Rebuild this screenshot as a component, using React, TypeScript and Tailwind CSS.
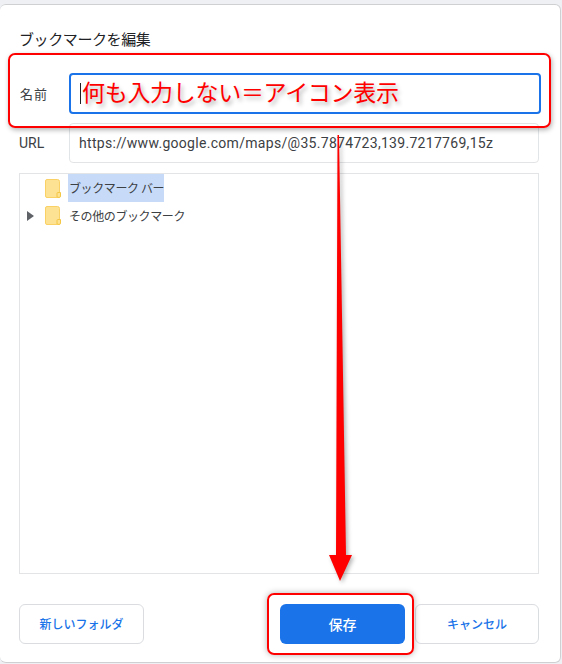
import React from "react";

const font = { jp: "font-['Noto_Sans_CJK_JP','Liberation_Sans',sans-serif]" };

function Folder() {
    return (
        <svg width="17" height="19" viewBox="0 0 17 19" className="shrink-0">
            <path d="M2 .5h10.5a2 2 0 0 1 2 2v14a2 2 0 0 1-2 2H2a1.500 1.500 0 0 1-1.500-1.500V2A1.500 1.500 0 0 1 2 .5z" fill="#fde293" stroke="#fad165" />
            <path d="M12 18v-3.500a1 1 0 0 1 1-1h2.500V17a1.500 1.500 0 0 1-1.500 1.500z" fill="#fde293" stroke="#f3c644" />
        </svg>
    );
}

export default function App() {
    return (
        <div className={`relative w-[562px] h-[664px] overflow-hidden bg-[#eef0f3] pt-[4px] text-[#3c4043] ${font.jp}`}>
            {/* Dialog */}
            <div className="w-[561px] h-[659px] bg-white border border-[#cfd0d2] border-l-0 rounded-[6px] pl-[19px] pr-[21px] pt-[23px] flex flex-col">
                <h1 className="text-[15px] leading-[22px] tracking-[-0.4px] text-[#202124] mb-[23px]">ブックマークを編集</h1>

                <div className="flex items-center h-[41px] mb-[9px] w-[522px]">
                    <span className="w-[50px] shrink-0 pl-px text-[13px] tracking-[1px] text-[#3c4043]">名前</span>
                    <div className="flex-1 h-[41px] border-2 border-[#1a73e8] rounded-[4px] flex items-center pl-[9px]">
                        <span className="w-px h-[21px] bg-[#202124] mr-[1px]"></span>
                        <span className="pb-[6px] text-[23px] leading-[30px] tracking-[-0.3px] text-[#ff0000] [text-shadow:2px_3px_4px_rgba(0,0,0,0.3)] whitespace-nowrap">何も入力しない＝アイコン表示</span>
                    </div>
                </div>

                <div className="flex items-center h-[40px] mb-[10px]">
                    <span className="w-[50px] shrink-0 text-[14px] font-['Roboto','Liberation_Sans',sans-serif] text-[#3c4043]">URL</span>
                    <div className="flex-1 h-[40px] border border-[#e3e4e6] rounded-[4px] flex items-center pl-[9px] text-[14px] tracking-[0.3px] font-['Roboto','Liberation_Sans',sans-serif] text-[#3c4043] whitespace-nowrap">
                        https://www.google.com/maps/@35.7874723,139.7217769,15z
                    </div>
                </div>

                {/* Folder tree */}
                <div className="h-[401px] border border-[#e3e4e6] text-[12px] tracking-[-0.4px] text-[#3c4043]">
                    <div className="flex items-center h-[28px] pl-[25px]">
                        <Folder />
                        <span className="ml-[6px] h-[28px] w-[96px] bg-[#c7dbf9] flex items-center pl-[1px] whitespace-nowrap">ブックマーク バー</span>
                    </div>
                    <div className="flex items-center h-[27px] pl-[7px]">
                        <span className="w-0 h-0 border-y-[5px] border-y-transparent border-l-[7px] border-l-[#5f6368] mr-[11px]"></span>
                        <Folder />
                        <span className="ml-[7px] whitespace-nowrap">その他のブックマーク</span>
                    </div>
                </div>

                {/* Buttons */}
                <div className="flex items-center mt-[30px] text-[12px] font-medium">
                    <button className="w-[125px] h-[40px] border border-[#dadce0] rounded-[6px] text-[#1a73e8]">新しいフォルダ</button>
                    <button className="ml-auto w-[125px] h-[40px] rounded-[6px] bg-[#1a73e8] text-white text-[14px]">保存</button>
                    <button className="ml-[10px] w-[124px] h-[40px] border border-[#dadce0] rounded-[6px] text-[#1a73e8]">キャンセル</button>
                </div>
            </div>

            {/* Annotations */}
            <div className="absolute left-[8px] top-[53px] w-[543px] h-[75px] border-2 border-[#ff0000] rounded-[7px] shadow-[1px_2px_5px_rgba(0,0,0,0.3)]"></div>
            <div className="absolute left-[267px] top-[593px] w-[147px] h-[62px] border-2 border-[#ff0000] rounded-[7px] shadow-[0_0_6px_rgba(0,0,0,0.3)]"></div>
            <svg className="absolute left-[320px] top-[130px] drop-shadow-[2px_2px_2px_rgba(0,0,0,0.3)]" width="50" height="460" viewBox="0 0 50 460">
                <path d="M17.500 5 L19 5 L26 425 L32 425 L20 451 L9 425 L16 425 Z" fill="#ff0000" />
            </svg>
        </div>
    );
}
